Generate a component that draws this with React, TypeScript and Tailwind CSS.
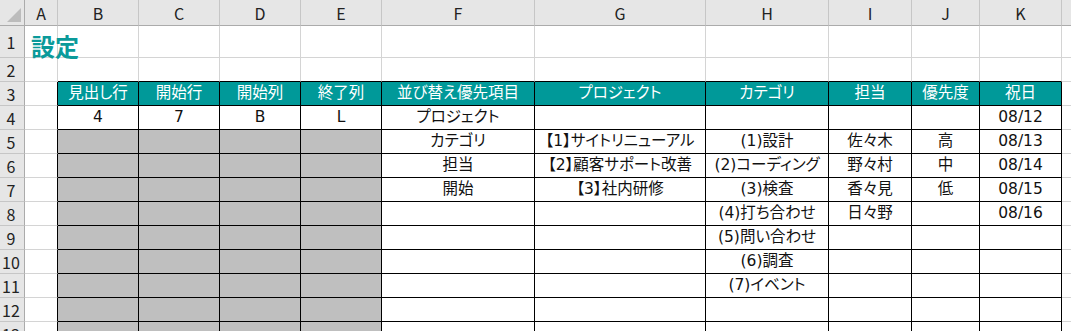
const COLS = ["A", "B", "C", "D", "E", "F", "G", "H", "I", "J", "K", "L"];
const ROW_COUNT = 13;

// sheet contents keyed by row number, then column index (A = 0)
const cells: Record<number, Record<number, string>> = {
  3: { 1: "見出し行", 2: "開始行", 3: "開始列", 4: "終了列", 5: "並び替え優先項目", 6: "プロジェクト", 7: "カテゴリ", 8: "担当", 9: "優先度", 10: "祝日" },
  4: { 1: "4", 2: "7", 3: "B", 4: "L", 5: "プロジェクト", 10: "08/12" },
  5: { 5: "カテゴリ", 6: "【1】サイトリニューアル", 7: "(1)設計", 8: "佐々木", 9: "高", 10: "08/13" },
  6: { 5: "担当", 6: "【2】顧客サポート改善", 7: "(2)コーディング", 8: "野々村", 9: "中", 10: "08/14" },
  7: { 5: "開始", 6: "【3】社内研修", 7: "(3)検査", 8: "香々見", 9: "低", 10: "08/15" },
  8: { 7: "(4)打ち合わせ", 8: "日々野", 10: "08/16" },
  9: { 7: "(5)問い合わせ" },
  10: { 7: "(6)調査" },
  11: { 7: "(7)イベント" },
};

const inTable = (r: number, c: number) => r >= 3 && r <= ROW_COUNT && c >= 1 && c <= 10;

function Cell({ r, c }: { r: number; c: number }) {
  const right = inTable(r, c) || inTable(r, c + 1) ? "border-r-black" : "border-r-[#d4d4d4]";
  const bottom = inTable(r, c) || inTable(r + 1, c) ? "border-b-black" : "border-b-[#d4d4d4]";
  let bg = "bg-white";
  if (r === 3 && inTable(r, c)) bg = "bg-[#009999] text-white";
  else if (r >= 5 && c >= 1 && c <= 4) bg = "bg-[#bfbfbf]";

  if (r === 1 && c === 0) {
    return (
      <div className={`relative border-r border-b ${right} ${bottom} bg-white`}>
        <span className="absolute left-[6px] top-[2px] whitespace-nowrap font-['Noto_Sans_CJK_JP',sans-serif] text-[24px] font-bold text-[#0a9a9a]">
          設定
        </span>
      </div>
    );
  }

  return (
    <div
      className={`flex items-center justify-center overflow-visible whitespace-nowrap border-r border-b pt-[1px] text-[15.5px] leading-none [font-feature-settings:'palt'] ${right} ${bottom} ${bg}`}
    >
      {cells[r]?.[c] ?? ""}
    </div>
  );
}

export default function App() {
  const rows = Array.from({ length: ROW_COUNT }, (_, i) => i + 1);

  return (
    <div className="h-[331px] w-[1071px] overflow-hidden bg-white font-['DejaVu_Sans','Noto_Sans_CJK_JP',sans-serif] text-[#111]">
      <div className="grid w-max grid-cols-[25px_33px_81px_81px_81px_81px_153px_171px_123px_83px_68px_82px_82px] grid-rows-[26px_32px_repeat(12,24px)]">
        {/* select-all corner */}
        <div className="relative border-r border-b border-r-[#ababab] border-b-[#ababab] bg-[#e6e6e6]">
          <svg className="absolute right-[3px] bottom-[3px]" width="14" height="14" viewBox="0 0 14 14">
            <polygon points="14,0 14,14 0,14" fill="#bcbcbc" />
          </svg>
        </div>
        {COLS.map((col, i) => (
          <div
            key={col}
            className="flex items-center justify-center border-r border-b border-r-[#c6c6c6] border-b-[#ababab] bg-[#e6e6e6] font-['Noto_Sans_CJK_JP',sans-serif] text-[16px] text-[#222]"
          >
            {/* last column is scrolled mostly out of view, its letter isn't visible */}
            {i < COLS.length - 1 ? col : ""}
          </div>
        ))}

        {rows.map((r) => [
          <div
            key={`h${r}`}
            className="flex items-center justify-center border-r border-b border-r-[#ababab] border-b-[#c6c6c6] bg-[#e6e6e6] pr-[2px] font-['Noto_Sans_CJK_JP',sans-serif] text-[16px] text-[#222]"
          >
            {r}
          </div>,
          ...COLS.map((_, c) => <Cell key={`${r}-${c}`} r={r} c={c} />),
        ])}
      </div>
    </div>
  );
}
